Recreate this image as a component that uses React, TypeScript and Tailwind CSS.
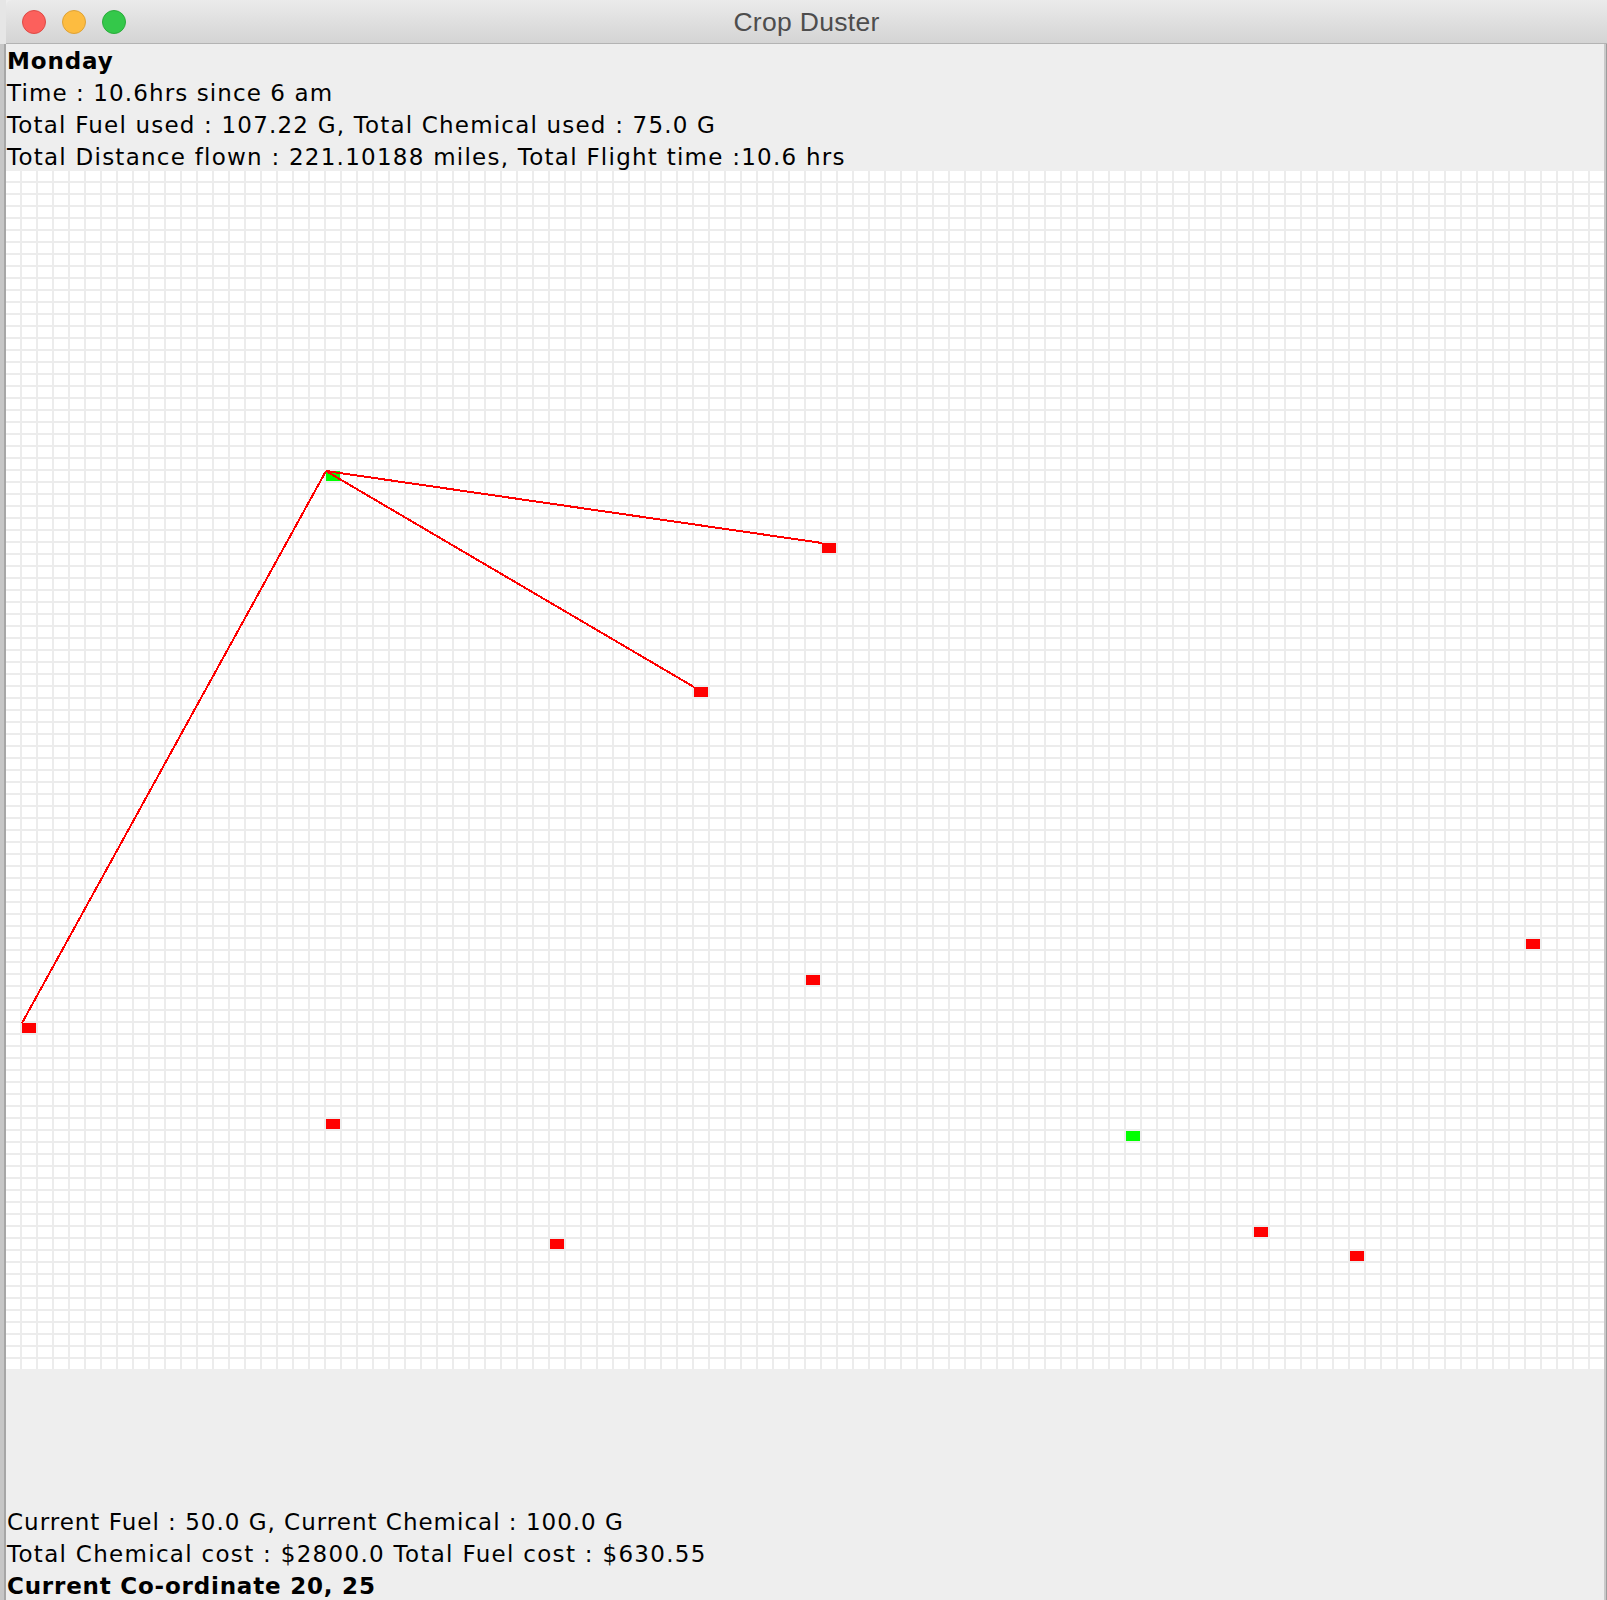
import React from "react";

const COLS = 100;
const ROWS = 100;
const CW = 16;
const CH = 12;

const redCells: [number, number][] = [
  [51, 31],
  [43, 43],
  [1, 71],
  [50, 67],
  [95, 64],
  [20, 79],
  [34, 89],
  [78, 88],
  [84, 90],
];
const greenCells: [number, number][] = [
  [20, 25],
  [70, 80],
];
const paths: [number, number][] = [
  [1, 71],
  [51, 31],
  [43, 43],
];
const origin: [number, number] = [20, 25];

function Grid() {
  const w = COLS * CW - 2;
  const h = ROWS * CH - 2;
  return (
    <svg width={w} height={h} viewBox={`0 0 ${w} ${h}`} className="block shrink-0">
      <defs>
        <pattern id="cell" width={CW} height={CH} patternUnits="userSpaceOnUse">
          <rect x={0} y={0} width={CW} height={CH} fill="#ececec" />
          <rect x={0} y={0} width={14} height={10} fill="#ffffff" />
        </pattern>
      </defs>
      <rect x={0} y={0} width={w} height={h} fill="url(#cell)" />
      {redCells.map(([c, r], i) => (
        <rect key={"r" + i} x={c * CW} y={r * CH} width={14} height={10} fill="#ff0000" />
      ))}
      {greenCells.map(([c, r], i) => (
        <rect key={"g" + i} x={c * CW} y={r * CH} width={14} height={10} fill="#00ff00" />
      ))}
      {paths.map(([c, r], i) => (
        <line
          key={"l" + i}
          x1={origin[0] * CW}
          y1={origin[1] * CH}
          x2={c * CW}
          y2={r * CH}
          stroke="#ff0000"
          strokeWidth={2}
          shapeRendering="crispEdges"
        />
      ))}
    </svg>
  );
}

export default function App() {
  return (
    <div className="w-[1607px] h-[1600px] flex flex-row overflow-hidden bg-[#eeeeee] font-['DejaVu_Sans',sans-serif]">
      <div className="w-[6px] flex flex-col shrink-0">
        <div className="h-[44px] bg-[#e6e6e6]" />
        <div className="flex-1 bg-[#c6c6c6] border-r-2 border-[#a6a6a6]" />
      </div>
      <div className="flex-1 flex flex-col">
        <div className="relative h-[44px] shrink-0 rounded-tl-[6px] bg-linear-to-b from-[#ebebeb] to-[#d4d4d4] border-b border-[#b3b3b3] flex items-center justify-center">
          <div className="absolute left-[16px] top-[10px] flex flex-row gap-[16px]">
            <div className="w-[24px] h-[24px] rounded-full bg-[#fc605c] border border-[#de4a45]" />
            <div className="w-[24px] h-[24px] rounded-full bg-[#fdbc40] border border-[#dea236]" />
            <div className="w-[24px] h-[24px] rounded-full bg-[#34c84a] border border-[#2aac3b]" />
          </div>
          <div className="pt-[2px] text-[26.5px] leading-none tracking-[0.3px] text-[#4d4d4d] font-['Liberation_Sans',Arial,sans-serif]">
            Crop Duster
          </div>
        </div>
        <div className="flex-1 flex flex-row">
          <div className="w-[1598px] flex flex-col">
            <div className="h-[127px] shrink-0 pt-[0.5px] pl-px text-[23px] leading-[32px] text-black">
              <div className="font-bold tracking-[0.87px]">Monday</div>
              <div className="tracking-[1.1px]">Time : 10.6hrs since 6 am</div>
              <div className="tracking-[1.19px]">Total Fuel used : 107.22 G, Total Chemical used : 75.0 G</div>
              <div className="tracking-[1.25px]">Total Distance flown : 221.10188 miles, Total Flight time :10.6 hrs</div>
            </div>
            <Grid />
            <div className="flex-1 flex flex-col justify-end mb-[-1.5px] pl-px text-[23px] leading-[32px] text-black">
              <div className="tracking-[1.0px]">Current Fuel : 50.0 G, Current Chemical : 100.0 G</div>
              <div className="tracking-[1.3px]">Total Chemical cost : $2800.0 Total Fuel cost : $630.55</div>
              <div className="font-bold tracking-[0.8px]">Current Co-ordinate 20, 25</div>
            </div>
          </div>
          <div className="flex-1 bg-[#c9c9c9] border-r border-[#9c9c9c]" />
        </div>
      </div>
    </div>
  );
}
